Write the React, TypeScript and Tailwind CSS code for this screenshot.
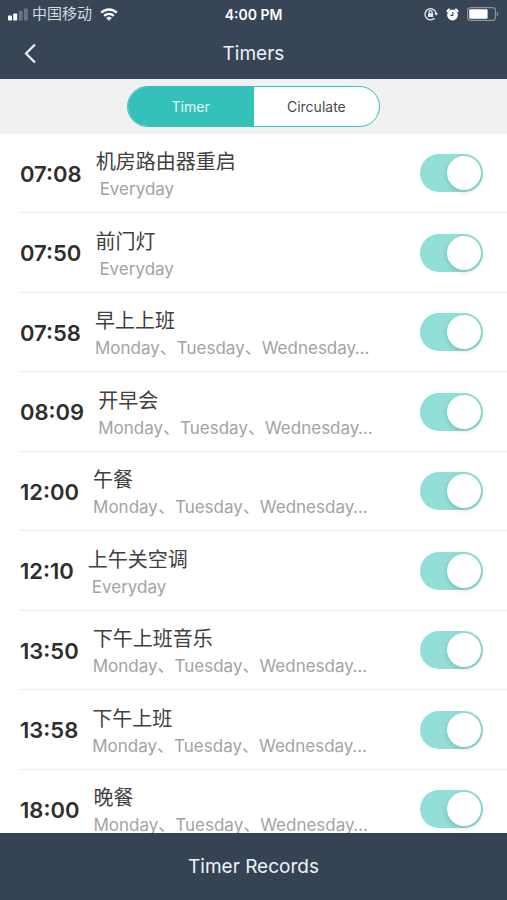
import React, { useState } from 'react';

const WEEKDAYS = 'Monday、Tuesday、Wednesday…';

const initialTimers = [
  { time: '07:08', name: '机房路由器重启', repeat: 'Everyday', enabled: true },
  { time: '07:50', name: '前门灯', repeat: 'Everyday', enabled: true },
  { time: '07:58', name: '早上上班', repeat: WEEKDAYS, enabled: true },
  { time: '08:09', name: '开早会', repeat: WEEKDAYS, enabled: true },
  { time: '12:00', name: '午餐', repeat: WEEKDAYS, enabled: true },
  { time: '12:10', name: '上午关空调', repeat: 'Everyday', enabled: true },
  { time: '13:50', name: '下午上班音乐', repeat: WEEKDAYS, enabled: true },
  { time: '13:58', name: '下午上班', repeat: WEEKDAYS, enabled: true },
  { time: '18:00', name: '晚餐', repeat: WEEKDAYS, enabled: true },
];

type Timer = (typeof initialTimers)[number];

function SignalIcon() {
  return (
    <svg width="20" height="13" viewBox="0 0 20 13" fill="#fff" aria-hidden="true">
      <rect x="0" y="7.5" width="4" height="5" rx="0.8" />
      <rect x="5.2" y="5.5" width="4" height="7" rx="0.8" />
      <rect x="10.8" y="3" width="3.8" height="9.5" rx="0.8" opacity="0.25" />
      <rect x="16" y="0.5" width="3.8" height="12" rx="0.8" opacity="0.25" />
    </svg>
  );
}

function WifiIcon() {
  return (
    <svg width="18" height="13" viewBox="0 0 18 13" fill="none" stroke="#fff" strokeWidth="2.4" aria-hidden="true">
      <path d="M1.2 4.6a11.2 11.2 0 0 1 15.6 0" />
      <path d="M4.2 7.8a7 7 0 0 1 9.6 0" />
      <path d="M9 12.8 6.2 10a4 4 0 0 1 5.6 0z" fill="#fff" stroke="none" />
    </svg>
  );
}

function RotationLockIcon() {
  return (
    <svg width="14" height="14" viewBox="0 0 14 14" fill="none" stroke="#e6eaef" strokeWidth="1.3" aria-hidden="true">
      <path d="M10.6 11.3A5.6 5.6 0 1 1 12.1 6" />
      <path d="M10.3 6h3.7l-1.8 2.8z" fill="#e6eaef" stroke="none" />
      <rect x="4" y="6.2" width="5.2" height="3.9" rx="0.5" fill="#e6eaef" stroke="none" />
      <path d="M5.1 6.4V5.2a1.5 1.5 0 0 1 3 0v1.2" />
    </svg>
  );
}

function AlarmIcon() {
  return (
    <svg width="13" height="13" viewBox="0 0 13 13" fill="none" aria-hidden="true">
      <circle cx="6.5" cy="7" r="5.4" fill="#fff" />
      <path d="M1.3 3.3A7 7 0 0 1 3.2 1.4" stroke="#fff" strokeWidth="1.9" strokeLinecap="round" />
      <path d="M11.7 3.3A7 7 0 0 0 9.8 1.4" stroke="#fff" strokeWidth="1.9" strokeLinecap="round" />
      <path d="M6.8 4v3.4H4.4" stroke="#374557" strokeWidth="1.1" />
    </svg>
  );
}

function BatteryIcon() {
  return (
    <svg width="32" height="14" viewBox="0 0 32 14" fill="none" aria-hidden="true">
      <rect x="0.6" y="0.6" width="27.8" height="12.8" rx="3" stroke="#8b95a1" strokeWidth="1.1" />
      <rect x="2.2" y="2.2" width="18.4" height="9.6" rx="1.2" fill="#fff" />
      <path d="M29.8 4.8c2 .6 2 3.8 0 4.4z" fill="#8b95a1" />
    </svg>
  );
}

function StatusBar() {
  return (
    <div className="grid h-7 grid-cols-3 items-center px-2 text-[14px] text-white">
      <div className="flex items-center gap-1">
        <SignalIcon />
        <span className="mr-1 text-[15px] leading-5 text-[#d5dae0]">中国移动</span>
        <WifiIcon />
      </div>
      <span className="text-center font-semibold">4:00 PM</span>
      <div className="flex items-center justify-end gap-2">
        <RotationLockIcon />
        <AlarmIcon />
        <BatteryIcon />
      </div>
    </div>
  );
}

function TimerRow({ timer, onToggle }: { timer: Timer; onToggle: () => void }) {
  return (
    <li className="ml-5 flex shrink-0 items-center border-b border-[#ebebeb] pr-6 odd:h-[79px] even:h-20">
      <time className="pt-0.5 text-[22px] font-semibold text-[#2e2e2e]">{timer.time}</time>
      <div className="ml-3.5 min-w-0 flex-1 pt-1">
        <p className="truncate text-[20px] leading-7 text-[#404040]">{timer.name}</p>
        <p className={`truncate text-[17px] leading-[26px] text-[#a3a3a3] ${timer.repeat === 'Everyday' ? 'pl-1' : ''}`}>
          {timer.repeat}
        </p>
      </div>
      <label className="flex h-[38px] w-[63px] shrink-0 cursor-pointer items-center rounded-full bg-[#dcdcdc] px-0.5 has-checked:justify-end has-checked:bg-[#92dfd8]">
        <input
          type="checkbox"
          role="switch"
          className="sr-only"
          aria-label={`${timer.time} ${timer.name}`}
          checked={timer.enabled}
          onChange={onToggle}
        />
        <span className="size-[34px] rounded-full bg-white shadow-[0_2px_5px_rgba(0,60,60,0.2)]" />
      </label>
    </li>
  );
}

export default function App() {
  const [timers, setTimers] = useState(initialTimers);
  const [tab, setTab] = useState('Timer');

  const toggle = (idx: number) =>
    setTimers(timers.map((t, i) => (i === idx ? { ...t, enabled: !t.enabled } : t)));

  return (
    <div className="flex h-screen flex-col bg-white font-[Inter,'Noto_Sans_CJK_SC',sans-serif]">
      <header className="h-[79px] shrink-0 bg-[#374557]">
        <StatusBar />
        <div className="grid h-[51px] grid-cols-3 items-center px-[18px] text-[#eef3f8]">
          <button type="button" aria-label="Back" className="flex size-6 items-center justify-center">
            <svg width="14" height="20" viewBox="0 0 14 20" fill="none" stroke="currentColor" strokeWidth="2.2" aria-hidden="true">
              <path d="M12 .5 3 9.5l9 9" />
            </svg>
          </button>
          <h1 className="pt-0.5 text-center text-[19px]">Timers</h1>
        </div>
      </header>

      <div className="flex h-[55px] shrink-0 items-center justify-center bg-[#f1f1f1]">
        <div className="flex h-[41px] w-1/2 overflow-hidden rounded-full border border-[#33c1b9] bg-white text-[14px]">
          {['Timer', 'Circulate'].map((label) => (
            <button
              key={label}
              type="button"
              aria-pressed={tab === label}
              onClick={() => setTab(label)}
              className={`flex-1 ${tab === label ? 'bg-[#33c1b9] text-[#e6fbf9]' : 'text-[#4a4a4a]'}`}
            >
              {label}
            </button>
          ))}
        </div>
      </div>

      <ul className="flex min-h-0 flex-1 flex-col overflow-y-auto [scrollbar-width:none]">
        {timers.map((timer, idx) => (
          <TimerRow key={timer.time} timer={timer} onToggle={() => toggle(idx)} />
        ))}
      </ul>

      <button type="button" className="h-[67px] shrink-0 bg-[#354354] pt-0.5 text-[19px] text-[#eef3f8]">
        Timer Records
      </button>
    </div>
  );
}
